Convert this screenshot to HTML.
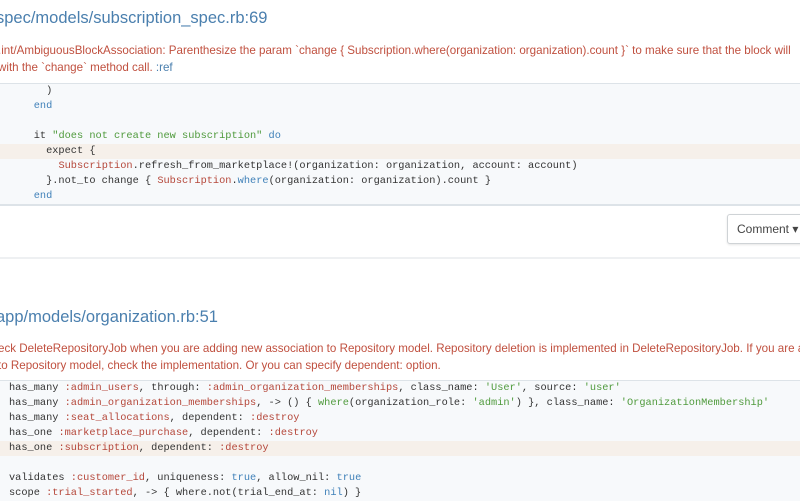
<!DOCTYPE html>
<html><head><meta charset="utf-8"><style>
*{margin:0;padding:0;box-sizing:border-box}
body{width:800px;height:500px;overflow:hidden;background:#fff;font-family:"Liberation Sans",sans-serif;position:relative}
.t{position:absolute;font-size:16.5px;color:#4a7fae;white-space:nowrap}
.w{position:absolute;font-size:11.6px;color:#c0503f;line-height:17px;white-space:nowrap}
.w a{color:#4a7fae}
.code{position:absolute;left:0;width:800px;background:#f7f9fb;border-top:1px solid #dde3e8;border-bottom:2px solid #dde3e8}
.l{height:15px;line-height:15px;font-family:"Liberation Mono",monospace;font-size:10.3px;color:#333;white-space:pre;padding-left:9px}
.hl{background:#f6f0ea}
.k{color:#3f80b8}.s{color:#4f9a3c}.r{color:#b5473a}
.btn{position:absolute;left:727px;top:214px;width:90px;height:30px;border:1px solid #cfd3d6;border-radius:3px;background:#fff;font-size:12px;color:#444;line-height:28px;padding-left:9px;box-shadow:0 1px 2px rgba(0,0,0,.1)}
.sep{position:absolute;left:0;top:257px;width:800px;height:2px;background:#eef0f2}
</style></head><body>
<div class="t" style="left:-4px;top:9px">spec/models/subscription_spec.rb:69</div>
<div class="w" style="left:-2px;top:42px">.int/AmbiguousBlockAssociation: Parenthesize the param `change { Subscription.where(organization: organization).count }` to make sure that the block will<br>with the `change` method call. <a>:ref</a></div>
<div class="code" style="top:83px">
<div class="l">      )</div>
<div class="l">    <span class="k">end</span></div>
<div class="l"> </div>
<div class="l">    it <span class="s">"does not create new subscription"</span> <span class="k">do</span></div>
<div class="l hl">      expect {</div>
<div class="l">        <span class="r">Subscription</span>.refresh_from_marketplace!(organization: organization, account: account)</div>
<div class="l">      }.not_to change { <span class="r">Subscription</span>.<span class="k">where</span>(organization: organization).count }</div>
<div class="l">    <span class="k">end</span></div>
</div>
<div class="btn">Comment ▾</div>
<div class="sep"></div>
<div class="t" style="left:-4px;top:308px">app/models/organization.rb:51</div>
<div class="w" style="left:-2px;top:340px">eck DeleteRepositoryJob when you are adding new association to Repository model. Repository deletion is implemented in DeleteRepositoryJob. If you are a<br> to Repository model, check the implementation. Or you can specify dependent: option.</div>
<div class="code" style="top:380px;border-bottom:none">
<div class="l">has_many <span class="r">:admin_users</span>, through: <span class="r">:admin_organization_memberships</span>, class_name: <span class="s">'User'</span>, source: <span class="s">'user'</span></div>
<div class="l">has_many <span class="r">:admin_organization_memberships</span>, -&gt; () { <span class="s">where</span>(organization_role: <span class="s">'admin'</span>) }, class_name: <span class="s">'OrganizationMembership'</span></div>
<div class="l">has_many <span class="r">:seat_allocations</span>, dependent: <span class="r">:destroy</span></div>
<div class="l">has_one <span class="r">:marketplace_purchase</span>, dependent: <span class="r">:destroy</span></div>
<div class="l hl">has_one <span class="r">:subscription</span>, dependent: <span class="r">:destroy</span></div>
<div class="l"> </div>
<div class="l">validates <span class="r">:customer_id</span>, uniqueness: <span class="k">true</span>, allow_nil: <span class="k">true</span></div>
<div class="l">scope <span class="r">:trial_started</span>, -&gt; { where.not(trial_end_at: <span class="k">nil</span>) }</div>
</div>
</body></html>
